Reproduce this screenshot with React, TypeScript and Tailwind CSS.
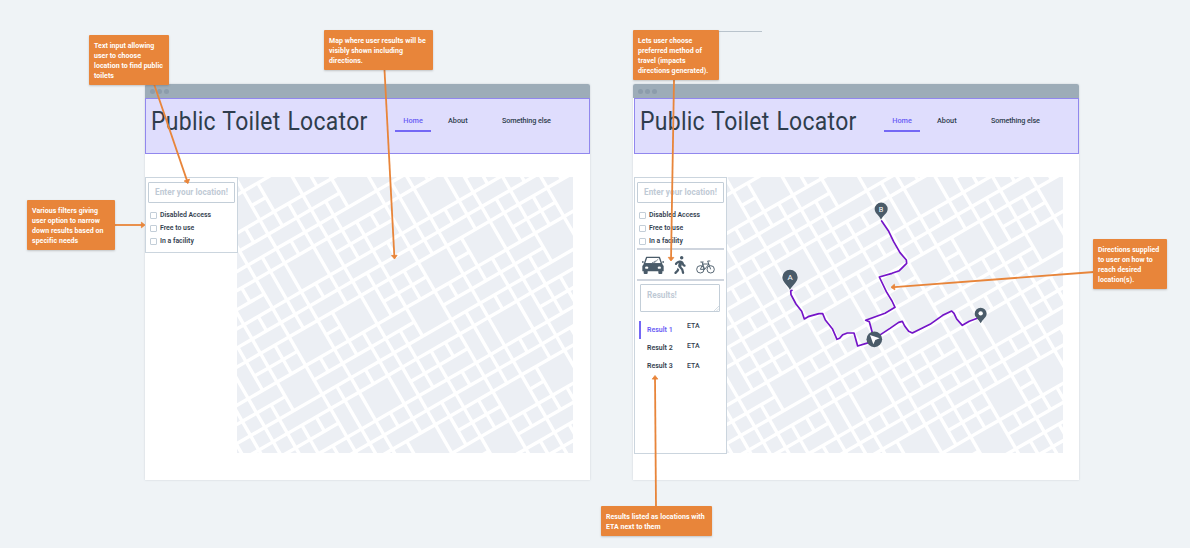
import React from "react";
import { FaWalking } from "react-icons/fa";
import clsx from "clsx";

/* Each block of the street grid: column, row, columns wide, rows high. */
const BLOCKS: [number, number, number, number][] = [
  [0, 0, 2, 2], [2, 0, 1, 2], [3, 0, 1, 1], [4, 0, 1, 1], [5, 0, 1, 1], [6, 0, 1, 1], [7, 0, 1, 2], [8, 0, 1, 2],
  [3, 1, 1, 1], [4, 1, 1, 1], [5, 1, 2, 1],
  [0, 2, 1, 1], [1, 2, 1, 1], [2, 2, 1, 1], [3, 2, 2, 1], [5, 2, 1, 1], [6, 2, 1, 1], [7, 2, 1, 1], [8, 2, 1, 1],
  [0, 3, 2, 1], [2, 3, 1, 1], [3, 3, 1, 1], [4, 3, 1, 1], [5, 3, 2, 1], [7, 3, 1, 1], [8, 3, 1, 1],
  [0, 4, 1, 1], [1, 4, 2, 2], [3, 4, 1, 2], [4, 4, 1, 1], [5, 4, 1, 1], [6, 4, 1, 1], [7, 4, 2, 2],
  [0, 5, 1, 1], [4, 5, 1, 1], [5, 5, 1, 1], [6, 5, 1, 1],
  [0, 6, 1, 1], [1, 6, 1, 1], [2, 6, 1, 1], [3, 6, 2, 1], [5, 6, 2, 2], [7, 6, 1, 1], [8, 6, 1, 1],
  [0, 7, 2, 1], [2, 7, 1, 1], [3, 7, 1, 1], [4, 7, 1, 1], [7, 7, 2, 1],
  [0, 8, 1, 1], [1, 8, 1, 1], [2, 8, 1, 1], [3, 8, 1, 1], [4, 8, 3, 1], [7, 8, 1, 1], [8, 8, 1, 1],
];

const CELL = 16.56;
const STREET = 3.4;
const TILES = [-2, -1, 0, 1, 2];

function StreetMap() {
  return (
    <svg className="block h-[276px] w-[336px] shrink-0 bg-white" viewBox="0 0 336 276">
      <g transform="translate(47.7 86) rotate(-30)" fill="#eceff4">
        {TILES.map((tx) =>
          TILES.map((ty) =>
            BLOCKS.map(([c, r, w, h]) => (
              <rect
                key={`${tx}:${ty}:${c}:${r}`}
                x={(tx * 9 + c) * CELL + STREET / 2}
                y={(ty * 9 + r) * CELL + STREET / 2}
                width={w * CELL - STREET}
                height={h * CELL - STREET}
              />
            )),
          ),
        )}
      </g>
    </svg>
  );
}

function Header() {
  return (
    <div className="flex h-[56px] shrink-0 border border-[#9187ee] bg-[#dfddfd] text-[#2f3d4d]">
      <h1 className="mt-[4px] ml-[5px] h-[36px] w-[244px] origin-left scale-x-[.9] text-[25.5px] leading-[36px] font-normal tracking-[.32px] [word-spacing:1px] whitespace-nowrap">
        Public Toilet Locator
      </h1>
      <nav className="mt-[15px] flex text-[7.3px] leading-[14px] font-medium whitespace-nowrap">
        <span className="h-[17.500px] w-[36px] border-b-2 border-[#7468f5] text-center text-[#6a5cf5]">Home</span>
        <span className="ml-[17px] w-[54px]">About</span>
        <span className="tracking-[-.13px]">Something else</span>
      </nav>
    </div>
  );
}

function Filters() {
  return (
    <>
      <div className="mx-[2px] mt-[4px] flex h-[21px] items-center justify-center rounded-[1px] border border-[#c3ced8] text-[8.2px] leading-none font-bold tracking-[.07px] whitespace-nowrap text-[#bfcad5]">
        Enter your location!
      </div>
      <div className="mt-[5.6px] flex flex-col pl-[4px] text-[6.9px] font-semibold text-[#33414f]">
        {["Disabled Access", "Free to use", "In a facility"].map((label) => (
          <label key={label} className="flex h-[13.2px] items-center gap-[3px] whitespace-nowrap">
            <span className="h-[7px] w-[7px] rounded-[1px] border border-[#c3ced8]" />
            {label}
          </label>
        ))}
      </div>
    </>
  );
}

function CarIcon() {
  return (
    <svg className="h-[18px] w-[22px]" viewBox="0 0 66 54">
      <path d="M14 4h38l7 20H7z" fill="#fff" stroke="#4a5b69" strokeWidth="4" strokeLinejoin="round" />
      <path d="M30 20l11-3 8-8M37 20l3-6" fill="none" stroke="#4a5b69" strokeWidth="2" />
      <path d="M7 22h52l6 8v16h-4v5q0 3-3 3h-6q-3 0-3-3v-5H17v5q0 3-3 3H8q-3 0-3-3v-5H1V30z" fill="#4a5b69" />
      <ellipse cx="14" cy="35" rx="5" ry="3.5" fill="#fff" />
      <ellipse cx="52" cy="35" rx="5" ry="3.5" fill="#fff" />
      <path d="M0 18h5M61 18h5" stroke="#4a5b69" strokeWidth="4" />
    </svg>
  );
}

function BikeIcon() {
  return (
    <svg className="mt-[4px] ml-[9px] h-[14px] w-[19px]" viewBox="0 0 57 42" fill="none" stroke="#4a5b69" strokeWidth="2.8">
      <circle cx="13" cy="28" r="11" />
      <circle cx="44" cy="28" r="11" />
      <path d="M13 28l8-16h18l-13 16zM26 28l-8-22M13 6h10M44 28L35 3h8" />
    </svg>
  );
}

function BrowserWindow({ children, className, inset }: { children: React.ReactNode; className: string; inset: string }) {
  return (
    <section className={clsx("absolute top-[84px] isolate flex h-[396px] flex-col overflow-hidden rounded-t-[2px] bg-white shadow-[0_0_2px_rgba(80,100,120,.25)]", className)}>
      <div className="flex h-[14px] shrink-0 items-center gap-[2px] bg-[#9dacb8] pl-[5px]">
        <i className="h-[5px] w-[5px] rounded-full bg-[#8c9cab]" />
        <i className="h-[5px] w-[5px] rounded-full bg-[#8c9cab]" />
        <i className="h-[5px] w-[5px] rounded-full bg-[#8c9cab]" />
      </div>
      <div className={clsx("flex flex-col", inset)}>
        <Header />
        <div className="mt-[23px] flex items-start">{children}</div>
      </div>
    </section>
  );
}

function Results() {
  return (
    <div className="mt-[8.5px] flex flex-col text-[7px] font-semibold text-[#33414f]">
      {["Result 1", "Result 2", "Result 3"].map((name, i) => (
        <div key={name} className="ml-[4px] flex h-[18.2px] items-center">
          <span className={clsx("flex h-[18px] w-[48px] items-center border-l-2 pt-px pl-[6px]", i === 0 ? "border-[#7468f5] text-[#6a5cf5]" : "border-transparent")}>
            {name}
          </span>
          <span className={clsx("font-medium", i === 0 ? "pb-[7px]" : i === 1 ? "pb-[3px]" : "pt-0")}>ETA</span>
        </div>
      ))}
    </div>
  );
}

function Note({ lines, className }: { lines: string[]; className: string }) {
  return (
    <aside className={clsx("absolute flex flex-col rounded-[1px] bg-[#e8853a] pt-[6px] pl-[5px] text-[7px] leading-[10px] font-bold tracking-[.04px] whitespace-nowrap text-white shadow-[0_1px_2px_rgba(60,60,60,.25)]", className)}>
      {lines.map((line) => (
        <span key={line}>{line}</span>
      ))}
    </aside>
  );
}

const ARROWS: [number, number, number, number][] = [
  [154, 84, 188, 183.5],
  [384.5, 70, 394.5, 259],
  [674, 80, 671, 261],
  [114, 225, 145, 225],
  [1094, 272, 891, 287.3],
  [656, 507, 655, 375.5],
];

function Arrows() {
  return (
    <svg className="absolute inset-0 h-[548px] w-[1190px]" viewBox="0 0 1190 548">
      {ARROWS.map(([x1, y1, x2, y2]) => {
        const angle = (Math.atan2(y2 - y1, x2 - x1) * 180) / Math.PI;
        const length = Math.hypot(x2 - x1, y2 - y1);
        return (
          <g key={x1} transform={`translate(${x2} ${y2}) rotate(${angle})`}>
            <path d={`M${-length} 0H-3`} stroke="#e8853a" strokeWidth="1.8" />
            <path d="M0 0L-3.6-2.8V2.8Z" fill="#e8853a" stroke="#e8853a" strokeWidth=".8" strokeLinejoin="round" />
          </g>
        );
      })}
    </svg>
  );
}

function Route() {
  return (
    <svg className="absolute top-[190px] left-[770px] h-[170px] w-[240px]" viewBox="0 0 720 510">
      <g fill="none" stroke="#7414c8" strokeWidth="5" strokeLinejoin="round" strokeLinecap="round">
        <path d="M66 301L62 303L63 314L78 342L95 364L103 387L117 379L147 371H158L166 390L187 416L201 448L209 445L218 434L232 429H252L263 468L296 458" />
        <path d="M335 93L355 122L371 155L390 188L409 210L410 220L388 242L366 250L328 261L349 305L366 333L375 352L345 370L287 391L298 395L307 428" />
        <path d="M328 436L360 415L386 397L397 394L404 408L416 424L427 429L480 403L518 376L545 363L552 370L560 387L577 406L598 394L624 384" />
      </g>
      <g fill="#4a5b69">
        <path d="M60 300C52 284 37 277 37 262A23 23 0 0 1 83 262C83 277 68 284 60 300Z" />
        <path d="M333 89C328 76 314 70 314 57A19.500 19.500 0 0 1 353 57C353 70 339 76 333 89Z" />
        <path d="M632 400C626 387 614 382 614 371A18 18 0 0 1 650 371C650 382 638 387 632 400Z" />
        <circle cx="313" cy="448" r="23.500" />
      </g>
      <circle cx="632" cy="370" r="6.500" fill="#fff" />
      <path d="M300 435L329 445L316 450L310 463Z" fill="#fff" />
      <g fill="#fff" textAnchor="middle" className="font-['Roboto',sans-serif]">
        <text x="60" y="271" fontSize="24">A</text>
        <text x="333" y="65" fontSize="22">B</text>
      </g>
    </svg>
  );
}

export default function App() {
  return (
    <main className="relative h-[548px] w-[1190px] overflow-hidden bg-[#eff3f6] font-['Roboto',sans-serif]">
      <BrowserWindow className="left-[145px] w-[445px]" inset="">
        <div className="relative z-10 h-[76px] w-[93px] shrink-0 border border-[#cbd5de] bg-white">
          <Filters />
        </div>
        <div className="-ml-px">
          <StreetMap />
        </div>
      </BrowserWindow>

      <BrowserWindow className="left-[633px] w-[446px]" inset="ml-px">
        <div className="h-[277px] w-[93px] shrink-0 border border-[#cbd5de]">
          <Filters />
          <div className="mx-[2px] flex h-[33px] items-center border-y-2 border-[#cfd5de] pt-px pl-[5px]">
            <CarIcon />
            <FaWalking className="ml-[9px] h-[18px] w-[14px] text-[#4a5b69]" />
            <BikeIcon />
          </div>
          <div className="relative mt-[3px] ml-[5px] h-[28px] w-[80px] rounded-[1px] border border-[#c3ced8] pt-[4px] pl-[6px] text-[8.2px] leading-[12px] font-bold text-[#bfcad5]">
            Results!
            <svg className="absolute right-0 bottom-0 h-[5px] w-[5px]" viewBox="0 0 5 5" stroke="#c3ced8" strokeWidth=".7">
              <path d="M0 5L5 0M2.500 5L5 2.500" />
            </svg>
          </div>
          <Results />
        </div>
        <StreetMap />
      </BrowserWindow>

      <Route />
      <Arrows />

      <div className="absolute top-[31px] left-[663px] h-px w-[99px] bg-[#b9c3cc]" />
      <Note className="top-[35px] left-[89px] h-[50px] w-[80px]" lines={["Text input allowing", "user to choose", "location to find public", "toilets"]} />
      <Note className="top-[30px] left-[324px] h-[40px] w-[109px]" lines={["Map where user results will be", "visibly shown including", "directions."]} />
      <Note className="top-[30px] left-[633px] h-[50px] w-[86px]" lines={["Lets user choose", "preferred method of", "travel (impacts", "directions generated)."]} />
      <Note className="top-[200px] left-[27px] h-[50px] w-[88px]" lines={["Various filters giving", "user option to narrow", "down results based on", "specific needs"]} />
      <Note className="top-[239px] left-[1093px] h-[50px] w-[74px]" lines={["Directions supplied", "to user on how to", "reach desired", "location(s)."]} />
      <Note className="top-[506px] left-[601px] h-[30px] w-[111px]" lines={["Results listed as locations with", "ETA next to them"]} />
    </main>
  );
}
